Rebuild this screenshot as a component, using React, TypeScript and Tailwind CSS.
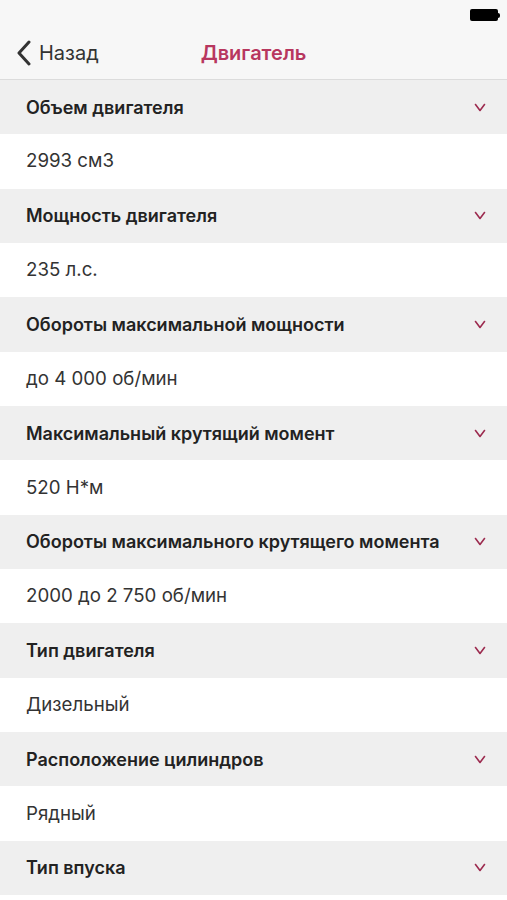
import React from "react";

const specs: [string, string][] = [
  ["Объем двигателя", "2993 см3"],
  ["Мощность двигателя", "235 л.с."],
  ["Обороты максимальной мощности", "до 4 000 об/мин"],
  ["Максимальный крутящий момент", "520 Н*м"],
  ["Обороты максимального крутящего момента", "2000 до 2 750 об/мин"],
  ["Тип двигателя", "Дизельный"],
  ["Расположение цилиндров", "Рядный"],
  ["Тип впуска", ""],
];

function Chevron() {
  return (
    <svg width="12" height="9" viewBox="0 0 12 9" fill="none">
      <path d="M1.5 1.5 L6 7.5 L10.5 1.5" stroke="#9c2b4f" strokeWidth="1.6" strokeLinecap="round" strokeLinejoin="round" />
    </svg>
  );
}

export default function App() {
  return (
    <div className="w-[507px] h-[900px] overflow-hidden bg-white font-['Inter','Liberation_Sans',sans-serif]">
      <div className="h-[30px] bg-[#f7f7f7] flex items-center justify-end pr-[7px]">
        <div className="flex items-center">
          <div className="w-[28px] h-[12px] rounded-[2px] bg-black" />
          <div className="w-[2px] h-[5px] bg-black rounded-r-sm" />
        </div>
      </div>
      <div className="h-[50px] pb-[3px] bg-[#f7f7f7] border-b border-[#dcdcdc] relative flex items-center">
        <div className="flex items-center pl-[16px] gap-[7px] text-[#333] text-[20px]">
          <svg width="16" height="26" viewBox="0 0 16 26" fill="none">
            <path d="M13 2 L3 13 L13 24" stroke="#333" strokeWidth="3" strokeLinecap="round" strokeLinejoin="round" />
          </svg>
          <span>Назад</span>
        </div>
        <div className="absolute left-0 right-0 text-center text-[20px] font-semibold text-[#b8375f] pointer-events-none">
          Двигатель
        </div>
      </div>
      {specs.map(([title, value]) => (
        <div key={title}>
          <div className="h-[54.35px] bg-[#efefef] flex items-center justify-between pl-[26px] pr-[21px]">
            <span className="text-[18px] font-semibold text-[#222]">{title}</span>
            <Chevron />
          </div>
          <div className="h-[54.35px] bg-white flex items-center pl-[26px]">
            <span className="text-[18.7px] text-[#333]">{value}</span>
          </div>
        </div>
      ))}
    </div>
  );
}
